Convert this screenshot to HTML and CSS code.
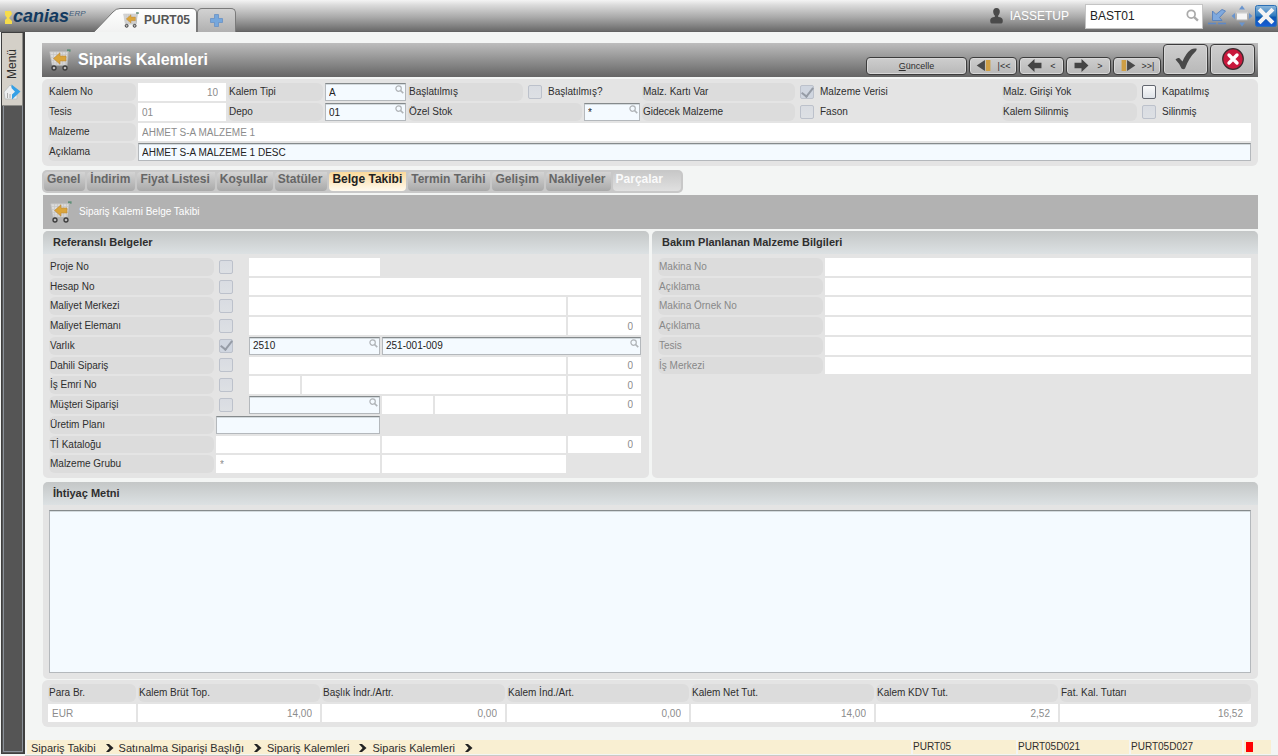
FILE: index.html
```html
<!DOCTYPE html>
<html lang="tr">
<head>
<meta charset="utf-8">
<title>Siparis Kalemleri</title>
<link rel="stylesheet" href="styles.css">
</head>
<body>
<svg class="defs" aria-hidden="true">
  <symbol id="lens" viewBox="0 0 12 12"><circle cx="4.8" cy="4.8" r="3.6" fill="none" stroke="currentColor" stroke-width="1.6"/><path d="M7.3 7.3 11 10.8" stroke="currentColor" stroke-width="2.2"/></symbol>
  <symbol id="cart" viewBox="0 0 22 22">
    <path d="M18 1.500h3.600" stroke="#5f8f78" stroke-width="2.400"/>
    <path d="M19.500 2 18 16.200H4.200" fill="none" stroke="#a9adab" stroke-width="1.200"/>
    <path d="M.8 2.800h18.200L17.500 16H3.200z" fill="#dcdcdc" stroke="#c2c2c2" stroke-width=".7"/>
    <path d="M1.500 5.500h17M2 8.500h16M2.500 11.500h15.500M3 14h14.500M4.500 3v13M7.500 3v13M10.500 3v13M13.500 3v13M16.500 3v13" stroke="#c4c4c4" stroke-width=".7"/>
    <path d="M4.500 9.500 11 3.800v3.200h6v5h-6v3.200z" fill="#dba53a" stroke="#b9873a" stroke-width=".6"/>
    <circle cx="5" cy="19" r="2" fill="#bbb" stroke="#3c3c3c" stroke-width="1.300"/><circle cx="16" cy="19" r="2" fill="#bbb" stroke="#3c3c3c" stroke-width="1.300"/>
  </symbol>
  <symbol id="chevron" viewBox="0 0 8 8"><path d="M0 0h3l4.500 4L3 8H0l3.600-4z" fill="#222"/></symbol>
</svg>

<header class="topbar">
  <div class="logo">
    <svg class="logo-mark" viewBox="0 0 8 14"><path d="M0 0h6l1 3-3 4 3 3v3H0V9l2-2-2-3z" fill="#f6dc4a"/></svg>
    <span class="logo-name">canias</span><span class="logo-sup">ERP</span>
  </div>
  <nav class="app-tabs">
    <button class="app-tab app-tab-active" type="button">
      <svg class="app-tab-shape" viewBox="0 0 103 24"><defs><linearGradient id="tabfill" x2="0" y2="1"><stop stop-color="#fff"/><stop offset="1" stop-color="#f1f2f1"/></linearGradient></defs><path d="M0 24 19 4Q22 .500 26 .500H98Q102.500 .500 102.500 5V24" fill="url(#tabfill)" stroke="#777"/></svg>
      <svg class="icon-cart-small"><use href="#cart"/></svg><span>PURT05</span>
    </button>
    <button class="app-tab app-tab-new" type="button" aria-label="Yeni sekme">
      <svg class="icon-plus" viewBox="0 0 13 13"><path d="M4.500 .500h4v4h4v4h-4v4h-4v-4h-4v-4h4z" fill="#76a7dc" stroke="#6890c4" stroke-width=".8"/></svg>
    </button>
  </nav>
  <div class="session">
    <svg class="icon-user" viewBox="0 0 13 16"><path d="M6.500 0C9 0 10 1.800 9.800 4c-.2 1.700-.9 3-1.600 3.600V9c3 .3 4.600 1.300 4.600 3.500 0 2-.5 3-1.500 3H1.700c-1 0-1.500-1-1.500-3C.2 10.300 1.800 9.300 4.800 9V7.600C4.100 7 3.400 5.700 3.200 4 3 1.800 4 0 6.500 0z" fill="#4a4a4a"/></svg>
    <span class="user-name">IASSETUP</span>
    <span class="search"><input type="text" value="BAST01" aria-label="Ara"><svg class="search-lens"><use href="#lens"/></svg></span>
    <button class="window-button" type="button" aria-label="Küçült"><svg viewBox="0 0 20 20"><path d="M1 17.500h8M11 17.500h8" stroke="#5d88c6" stroke-width="1.500"/><path d="M5.500 5v9.500H15l-2.500-3 6-6.500L15 3.500l-6 5z" fill="#7fa9de" stroke="#5580bd" stroke-width=".9"/></svg></button>
    <button class="window-button window-move" type="button" aria-label="Taşı"><svg viewBox="0 0 22 22"><path d="M5.500 7h11v8h-11z" fill="#f6f6f6" stroke="#b0b0b0"/><path d="M5 7.500h12" stroke="#ccc" stroke-width="2"/><path d="M11 .500 14 4.500H8zM11 21.500 14 17.500H8zM.500 11 4 8v6zM21.500 11 18 8v6z" fill="#6894ce"/></svg></button>
    <button class="window-button window-close" type="button" aria-label="Kapat"><svg viewBox="0 0 22 22"><defs><linearGradient id="blue" x2="0" y2="1"><stop stop-color="#8fb9dc"/><stop offset=".5" stop-color="#2d79bd"/><stop offset=".55" stop-color="#0b56ae"/><stop offset="1" stop-color="#1a5ed8"/></linearGradient></defs><rect x=".500" y=".500" width="21" height="21" rx="2" fill="url(#blue)" stroke="#2a6fb5"/><path d="M5.500 5.500 16.500 16.500M16.500 5.500 5.500 16.500" stroke="#f4f4f4" stroke-width="4" stroke-linecap="square"/></svg></button>
  </div>
</header>

<div class="workspace">
  <aside class="sidebar">
    <button class="menu-toggle" type="button">
      <span class="menu-text">Menü</span>
      <svg class="icon-home" viewBox="0 0 18 18"><path d="M1 9 7 2l7 7v7H2z" fill="#eceeef" stroke="#b9bcbe" stroke-width=".8"/><path d="M4.500 10v5M7 11v4" stroke="#aaa"/><path d="M8.500 1.500 17.500 8.500 9 16.500v-5L12 8.700 8.500 5z" fill="#35a0e6"/></svg>
    </button>
    <div class="menu-rail"></div>
  </aside>

  <div class="content">
    <main class="form">
      <div class="title-bar">
        <svg class="icon-cart"><use href="#cart"/></svg>
        <h1>Siparis Kalemleri</h1>
        <div class="toolbar">
          <button class="tool tool-update" type="button"><span><u>G</u>üncelle</span></button>
          <button class="tool tool-wide" type="button"><svg class="icon-step" viewBox="0 0 16 12"><path d="M0 6 9 0v12z" fill="#4a4a4a"/><path d="M10 0h5v12h-5z" fill="#cf9f45"/></svg><span>|&lt;&lt;</span></button>
          <button class="tool" type="button"><svg class="icon-arrow" viewBox="0 0 15 14"><path d="M0 7 7.500 0v4H15v6H7.500v4z" fill="#444"/></svg><span>&lt;</span></button>
          <button class="tool" type="button"><svg class="icon-arrow" viewBox="0 0 15 14"><path d="M15 7 7.500 0v4H0v6h7.500v4z" fill="#444"/></svg><span>&gt;</span></button>
          <button class="tool tool-wide" type="button"><svg class="icon-step" viewBox="0 0 16 12"><path d="M1 0h5v12H1z" fill="#cf9f45"/><path d="M16 6 7 0v12z" fill="#4a4a4a"/></svg><span>&gt;&gt;|</span></button>
          <button class="tool tool-big" type="button" aria-label="Onayla"><svg class="icon-big" viewBox="0 0 22 22"><path d="M.5 11.500Q2 9.500 4.200 10L7.500 13.500Q11 5 16 1.500 18.500 0 21.500 .500 22 1.500 21 3 14 9.500 10 20.500 8.500 22 6.500 20.500 4.500 15.500 .500 11.500z" fill="#484848"/></svg></button>
          <button class="tool tool-big" type="button" aria-label="İptal"><svg class="icon-big" viewBox="0 0 22 22"><circle cx="11" cy="11" r="10.300" fill="#c9183c" stroke="#3d2a2e" stroke-width="1.200"/><path d="M7 7l8 8M15 7l-8 8" stroke="#fff" stroke-width="3.400" stroke-linecap="round"/></svg></button>
        </div>
      </div>

      <section class="panel item-panel">
        <label for="f1" class="cap">Kalem No</label><input id="f1" class="field num" type="text" value="10" readonly>
        <label for="f2" class="cap">Kalem Tipi</label><span class="lookup"><input id="f2" class="field edit" type="text" value="A"><svg><use href="#lens"/></svg></span>
        <span class="cap">Başlatılmış</span><label class="tick span-2"><input type="checkbox" disabled>Başlatılmış?</label>
        <span class="cap">Malz. Kartı Var</span><label class="tick"><input type="checkbox" checked disabled>Malzeme Verisi</label>
        <span class="cap">Malz. Girişi Yok</span><label class="tick"><input type="checkbox">Kapatılmış</label>

        <label for="f3" class="cap">Tesis</label><input id="f3" class="field" type="text" value="01" readonly>
        <label for="f4" class="cap">Depo</label><span class="lookup"><input id="f4" class="field edit" type="text" value="01"><svg><use href="#lens"/></svg></span>
        <label for="f5" class="cap span-2">Özel Stok</label><span class="lookup"><input id="f5" class="field edit" type="text" value="*"><svg><use href="#lens"/></svg></span>
        <span class="cap">Gidecek Malzeme</span><label class="tick"><input type="checkbox" disabled>Fason</label>
        <span class="cap">Kalem Silinmiş</span><label class="tick"><input type="checkbox" disabled>Silinmiş</label>

        <label for="f6" class="cap">Malzeme</label><input id="f6" class="field span-rest" type="text" value="AHMET S-A MALZEME 1" readonly>
        <label for="f7" class="cap">Açıklama</label><input id="f7" class="field edit span-rest" type="text" value="AHMET S-A MALZEME 1 DESC">
      </section>

      <nav class="tabs">
        <button type="button">Genel</button><button type="button">İndirim</button><button type="button">Fiyat Listesi</button><button type="button">Koşullar</button><button type="button">Statüler</button><button type="button" class="tab-active">Belge Takibi</button><button type="button">Termin Tarihi</button><button type="button">Gelişim</button><button type="button">Nakliyeler</button><button type="button" class="tab-off">Parçalar</button>
      </nav>

      <div class="sub-bar"><svg class="icon-cart"><use href="#cart"/></svg><span>Sipariş Kalemi Belge Takibi</span></div>

      <div class="columns">
        <section class="group">
          <h2>Referanslı Belgeler</h2>
          <div class="rows ref-rows">
            <label for="c1" class="cap c-label">Proje No</label><input id="c1" class="box" type="checkbox" disabled><input class="field c3-4" type="text" readonly aria-label="Proje No">
            <label for="c2" class="cap c-label">Hesap No</label><input id="c2" class="box" type="checkbox" disabled><input class="field c3-7" type="text" readonly aria-label="Hesap No">
            <label for="c3" class="cap c-label">Maliyet Merkezi</label><input id="c3" class="box" type="checkbox" disabled><input class="field c3-6" type="text" readonly aria-label="Maliyet Merkezi"><input class="field" type="text" readonly aria-label="Maliyet Merkezi sıra">
            <label for="c4" class="cap c-label">Maliyet Elemanı</label><input id="c4" class="box" type="checkbox" disabled><input class="field c3-6" type="text" readonly aria-label="Maliyet Elemanı"><input class="field num" type="text" value="0" readonly aria-label="Maliyet Elemanı sıra">
            <label for="c5" class="cap c-label">Varlık</label><input id="c5" class="box" type="checkbox" checked disabled><span class="lookup c3-4"><input class="field edit" type="text" value="2510" aria-label="Varlık tipi"><svg><use href="#lens"/></svg></span><span class="lookup c5-7"><input class="field edit" type="text" value="251-001-009" aria-label="Varlık"><svg><use href="#lens"/></svg></span>
            <label for="c6" class="cap c-label">Dahili Sipariş</label><input id="c6" class="box" type="checkbox" disabled><input class="field c3-6" type="text" readonly aria-label="Dahili Sipariş"><input class="field num" type="text" value="0" readonly aria-label="Dahili Sipariş kalemi">
            <label for="c7" class="cap c-label">İş Emri No</label><input id="c7" class="box" type="checkbox" disabled><input class="field" type="text" readonly aria-label="İş Emri tipi"><input class="field c4-6" type="text" readonly aria-label="İş Emri No"><input class="field num" type="text" value="0" readonly aria-label="İş Emri kalemi">
            <label for="c8" class="cap c-label">Müşteri Siparişi</label><input id="c8" class="box" type="checkbox" disabled><span class="lookup c3-4"><input class="field edit" type="text" aria-label="Müşteri"><svg><use href="#lens"/></svg></span><input class="field" type="text" readonly aria-label="Sipariş tipi"><input class="field" type="text" readonly aria-label="Sipariş no"><input class="field num" type="text" value="0" readonly aria-label="Sipariş kalemi">
            <label for="r9" class="cap c-label">Üretim Planı</label><input id="r9" class="field edit c2-4" type="text">
            <label for="r10" class="cap c-label">Tİ Kataloğu</label><input id="r10" class="field c2-4" type="text" readonly><input class="field c5-6" type="text" readonly aria-label="Katalog açıklaması"><input class="field num" type="text" value="0" readonly aria-label="Katalog sırası">
            <label for="r11" class="cap c-label">Malzeme Grubu</label><input id="r11" class="field c2-4" type="text" value="*" readonly><input class="field c5-6" type="text" readonly aria-label="Grup açıklaması">
          </div>
        </section>
        <section class="group">
          <h2>Bakım Planlanan Malzeme Bilgileri</h2>
          <div class="rows plan-rows">
            <label for="p1" class="cap dim">Makina No</label><input id="p1" class="field" type="text" readonly>
            <label for="p2" class="cap dim">Açıklama</label><input id="p2" class="field" type="text" readonly>
            <label for="p3" class="cap dim">Makina Örnek No</label><input id="p3" class="field" type="text" readonly>
            <label for="p4" class="cap dim">Açıklama</label><input id="p4" class="field" type="text" readonly>
            <label for="p5" class="cap dim">Tesis</label><input id="p5" class="field" type="text" readonly>
            <label for="p6" class="cap dim">İş Merkezi</label><input id="p6" class="field" type="text" readonly>
          </div>
        </section>
      </div>

      <section class="group note">
        <h2><label for="note">İhtiyaç Metni</label></h2>
        <textarea id="note" class="edit"></textarea>
      </section>

      <section class="panel totals">
        <label for="t1" class="cap">Para Br.</label><label for="t2" class="cap">Kalem Brüt Top.</label><label for="t3" class="cap">Başlık İndr./Artr.</label><label for="t4" class="cap">Kalem İnd./Art.</label><label for="t5" class="cap">Kalem Net Tut.</label><label for="t6" class="cap">Kalem KDV Tut.</label><label for="t7" class="cap">Fat. Kal. Tutarı</label>
        <input id="t1" class="field" type="text" value="EUR" readonly><input id="t2" class="field num" type="text" value="14,00" readonly><input id="t3" class="field num" type="text" value="0,00" readonly><input id="t4" class="field num" type="text" value="0,00" readonly><input id="t5" class="field num" type="text" value="14,00" readonly><input id="t6" class="field num" type="text" value="2,52" readonly><input id="t7" class="field num" type="text" value="16,52" readonly>
      </section>
    </main>

    <footer class="status">
      <nav class="crumbs">
        <a href="#">Sipariş Takibi</a><svg><use href="#chevron"/></svg><a href="#">Satınalma Siparişi Başlığı</a><svg><use href="#chevron"/></svg><a href="#">Sipariş Kalemleri</a><svg><use href="#chevron"/></svg><a href="#">Siparis Kalemleri</a><svg><use href="#chevron"/></svg>
      </nav>
      <span class="status-cell status-code">PURT05</span><span class="status-cell status-id">PURT05D021</span><span class="status-cell status-id">PURT05D027</span><span class="status-cell status-light"><i></i></span>
    </footer>
  </div>
</div>
</body>
</html>
```

FILE: styles.css
```css
* { box-sizing: border-box; }

body {
  margin: 0;
  min-height: 100vh;
  display: flex;
  flex-direction: column;
  background: #f3f5f4;
  color: #2e2e2e;
  font: 10px/12px "Liberation Sans", Arial, sans-serif;
}

button, input, textarea { font: inherit; color: inherit; margin: 0; min-width: 0; }
button { padding: 0; border: 0; background: none; }
svg { display: block; flex: none; }
.defs { position: absolute; width: 0; height: 0; }

/* Top bar */
.topbar {
  display: flex;
  align-items: flex-end;
  height: 32px;
  padding-right: 1px;
  background: linear-gradient(#f4f4f4, #dcdcdc 15%, #a8a8a8 55%, #6a6a6a 97%, #5c5c5c);
}
.logo { display: flex; width: 94px; height: 32px; padding: 6px 0 0 5px; }
.logo-mark { width: 8px; height: 14px; margin-top: 5px; }
.logo-name { font: italic bold 18px/20px "Liberation Sans", Arial, sans-serif; color: #12395f; }
.logo-sup { font: italic 8px/12px "Liberation Sans", Arial, sans-serif; color: #3f5a78; margin-top: 2px; }
.app-tabs { display: flex; align-items: flex-end; }
.app-tab { display: flex; align-items: center; height: 24px; }
.app-tab-active {
  position: relative;
  width: 103px;
  gap: 5px;
  padding-left: 29px;
  font-size: 12px;
  font-weight: bold;
  color: #555;
}
.app-tab-shape { position: absolute; left: 0; top: 0; width: 103px; height: 24px; }
.app-tab-active > span, .icon-cart-small { position: relative; }
.icon-cart-small { width: 16px; height: 16px; }
.app-tab-new {
  justify-content: center;
  width: 39px;
  border: 1px solid #7a7a7a;
  border-bottom: 0;
  border-radius: 5px 5px 0 0;
  background: linear-gradient(#d2d2d2, #b0b0b0);
}
.icon-plus { width: 13px; height: 13px; }
.session { display: flex; align-items: center; height: 32px; margin-left: auto; gap: 4px; }
.icon-user { width: 13px; height: 16px; margin-right: 3px; }
.user-name { font-size: 12px; color: #fff; margin-right: 12px; }
.search { position: relative; display: block; }
.search input {
  width: 118px;
  height: 25px;
  padding: 0 4px;
  border: 1px solid #c4c4c4;
  background: #fff;
  color: #222;
  font-size: 12px;
  display: block;
}
.search-lens { position: absolute; right: 4px; top: 5px; width: 13px; height: 13px; color: #aaa; }
.window-button svg { width: 20px; height: 20px; }
.window-move svg, .window-close svg { width: 22px; height: 22px; }
.window-close { margin-left: -2px; }

/* Left rail */
.workspace { display: flex; flex: 1; }
.sidebar {
  display: flex;
  flex-direction: column;
  width: 24px;
  margin: 0 0 2px 1px;
  border: 1px solid #3f3f3f;
  border-width: 1px 2px 1px 1px;
  background: #555;
}
.menu-toggle {
  display: flex;
  flex-direction: column;
  align-items: center;
  justify-content: flex-end;
  gap: 4px;
  height: 73px;
  padding-bottom: 4px;
  background: #d4d0c8;
  border: 1px solid #8c8c88;
  border-width: 0 1px 1px 0;
}
.menu-text { writing-mode: vertical-rl; transform: rotate(180deg); font-size: 12px; line-height: 14px; }
.icon-home { width: 18px; height: 18px; }
.menu-rail { flex: 1; margin: 0 0 1px 1px; border: 1px solid #8a9199; border-top: 0; }

/* Form area */
.content { display: flex; flex-direction: column; flex: 1; min-width: 0; padding-bottom: 1px; border-bottom: 1px solid #c9c9c6; }
.form { display: flex; flex-direction: column; flex: 1; padding: 11px 20px 13px 17px; }
.title-bar {
  display: flex;
  align-items: center;
  height: 34px;
  padding: 0 3px 0 7px;
  background: linear-gradient(#bdbdbd, #656565);
}
.icon-cart { width: 22px; height: 22px; margin-right: 7px; }
.title-bar h1 { margin: 0; font-size: 16px; line-height: 20px; color: #fff; }
.toolbar { display: flex; align-items: flex-end; gap: 2px; margin-left: auto; padding-bottom: 2px; }
.tool {
  display: flex;
  align-items: center;
  justify-content: center;
  gap: 8px;
  width: 45px;
  height: 18px;
  border: 1px solid #3c3c3c;
  border-radius: 4px;
  background: linear-gradient(#cecece, #b8b8b8);
  box-shadow: inset 0 0 0 1px #d8d8d8;
  font-size: 9px;
}
.tool-update { width: 101px; }
.tool-wide { width: 48px; gap: 6px; }
.tool-big { width: 45px; height: 31px; }
.icon-step { width: 16px; height: 11px; }
.icon-arrow { width: 15px; height: 13px; }
.icon-big { width: 22px; height: 22px; }

.panel { border-radius: 6px; background: #e4e4e4; }
.item-panel {
  display: grid;
  grid-template-columns: 88fr 88fr 95fr 81fr 115fr 57fr 56fr 153fr 203fr 135fr 112fr;
  grid-auto-rows: 18px;
  gap: 2px;
  margin-top: 2px;
  padding: 4px 7px 5px 6px;
}
.span-2 { grid-column: span 2; }
.span-rest { grid-column: 2 / -1; }
.cap {
  display: block;
  min-width: 0;
  padding-left: 1px;
  line-height: 18px;
  white-space: nowrap;
  border-radius: 6px;
  background: #dcdcdc;
}
.dim { color: #888; }
.field {
  display: block;
  width: 100%;
  height: 100%;
  padding: 0 8px 0 4px;
  border: 0;
  background: #fff;
  color: #8c8c8c;
}
.num { text-align: right; }
.edit {
  border: 1px solid #b4b8bc;
  border-top-color: #858a8c;
  background: #f4faff;
  box-shadow: inset 0 1px #d3dade;
  color: #222;
}
.field.edit { padding: 0 3px; }
.lookup { position: relative; display: block; min-width: 0; }
.lookup svg { position: absolute; right: 2px; top: 2px; width: 9px; height: 9px; color: #b0b4b8; }
.tick { display: flex; align-items: center; gap: 6px; padding-left: 3px; white-space: nowrap; }
input[type="checkbox"] {
  appearance: none;
  flex: none;
  display: flex;
  align-items: center;
  justify-content: center;
  width: 14px;
  height: 14px;
  border: 1px solid #62666f;
  border-radius: 2px;
  background: linear-gradient(#fafafa, #dfe3e8);
}
input[type="checkbox"]:disabled { border-color: #bcc1cb; background: linear-gradient(#d9dce2, #dde0e4); }
input[type="checkbox"]:checked { background: #d0d6e0; }
input[type="checkbox"]:checked::after {
  content: "";
  width: 5px;
  height: 10px;
  margin-bottom: 3px;
  border: solid #969ca6;
  border-width: 0 2px 2px 0;
  transform: rotate(38deg);
}

/* Tabs */
.tabs {
  display: flex;
  align-self: flex-start;
  gap: 2px;
  height: 23px;
  margin-top: 4px;
  padding: 2px;
  border-radius: 5px;
  background: #c8c8c8;
}
.tabs button {
  padding: 0 5px 7px 3px;
  border-radius: 4px 0 4px 4px;
  background: linear-gradient(#d4d4d4, #a9a9a9);
  color: #666;
  font-size: 12px;
  font-weight: bold;
  line-height: 14px;
}
.tabs .tab-active { padding: 0 4px 5px 3px; background: linear-gradient(#fbd99a, #fffaf0); color: #222; }
.tabs .tab-off { padding-right: 18px; border-radius: 4px; background: linear-gradient(#c9c9c9, #e0e0e0); color: #fafafa; }

.sub-bar {
  display: flex;
  align-items: center;
  height: 34px;
  margin: 2px 0 2px 1px;
  padding-left: 7px;
  background: #b2b2b2;
  color: #fff;
}

/* Group boxes */
.columns { display: grid; grid-template-columns: 1fr 1fr; gap: 3px; margin-left: 1px; }
.group { min-width: 0; padding-bottom: 5px; border-radius: 5px; background: #e4e4e4; }
.group h2 {
  margin: 0;
  padding-left: 10px;
  border-radius: 5px 5px 0 0;
  background: linear-gradient(#c4c7c7, #dce1e3);
  font-size: 11px;
  line-height: 23px;
}
.rows { display: grid; grid-template-rows: repeat(11, minmax(0, 1fr)); gap: 2px; height: 215px; margin: 4px 7px 0 6px; }
.ref-rows { grid-template-columns: 165fr 31fr 51fr 78fr 51fr 131fr 73fr; margin-right: 8px; }
.plan-rows { grid-template-columns: 165fr 426fr; }
.c-label { grid-column: 1; }
.box { place-self: center start; }
.rows .box { margin-left: 3px; }
.c2-4 { grid-column: 2 / 5; }
.c3-4 { grid-column: 3 / 5; }
.c3-6 { grid-column: 3 / 7; }
.c3-7 { grid-column: 3 / 8; }
.c4-6 { grid-column: 4 / 7; }
.c5-6 { grid-column: 5 / 7; }
.c5-7 { grid-column: 5 / 8; }

.note { display: flex; flex-direction: column; flex: 1; min-height: 120px; margin: 4px 0 1px 1px; }
.note textarea { flex: 1; margin: 5px 7px 1px 6px; padding: 4px; resize: none; }

.totals {
  display: grid;
  grid-template-columns: 88fr 182fr 183fr 182fr 183fr 182fr 191fr;
  grid-auto-rows: 18px;
  gap: 2px;
  padding: 4px 7px 5px 6px;
}

/* Status bar */
.status { display: flex; gap: 2px; height: 14px; padding: 0 7px 0 2px; line-height: 14px; }
.crumbs { display: flex; align-items: center; flex: 1; gap: 10px; padding: 2px 0 0 4px; background: #f9efd2; white-space: nowrap; font-size: 11px; }
.crumbs a { color: inherit; text-decoration: none; }
.crumbs svg { width: 8px; height: 8px; margin-right: -5px; }
.status-cell { background: #f9efd2; }
.status-code { width: 103px; }
.status-id { width: 111px; }
.status-light { width: 27px; padding: 2px; }
.status-light i { display: block; width: 7px; height: 10px; background: #f00; }
```
